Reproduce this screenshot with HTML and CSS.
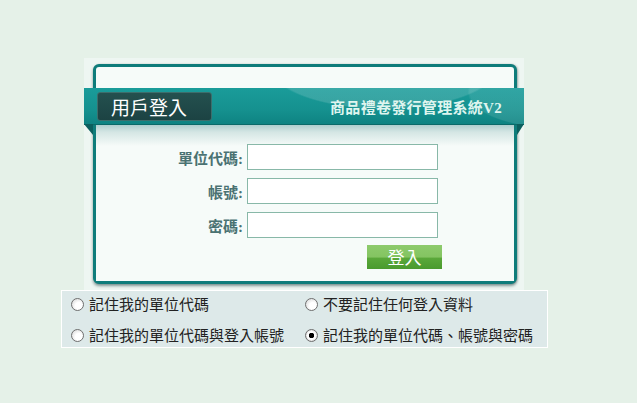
FILE: index.html
```html
<!DOCTYPE html>
<html lang="zh-Hant">
<head>
<meta charset="utf-8">
<title>用戶登入</title>
<link rel="stylesheet" href="styles.css">
</head>
<body>
<div class="page">
  <div class="panel">
    <div class="card">
      <div class="banner">
        <div class="login-tag">用戶登入</div>
        <div class="sys-title">商品禮卷發行管理系統V2</div>
      </div>
      <form class="form">
        <div class="row"><label class="lbl">單位代碼:</label><input class="field" type="text"></div>
        <div class="row"><label class="lbl">帳號:</label><input class="field" type="text"></div>
        <div class="row"><label class="lbl">密碼:</label><input class="field" type="password"></div>
        <div class="btn-row"><button type="button" class="btn">登入</button></div>
      </form>
    </div>
  </div>
  <div class="options">
    <label class="opt"><input type="radio" name="rem" class="radio"><span>記住我的單位代碼</span></label>
    <label class="opt"><input type="radio" name="rem" class="radio"><span>不要記住任何登入資料</span></label>
    <label class="opt"><input type="radio" name="rem" class="radio"><span>記住我的單位代碼與登入帳號</span></label>
    <label class="opt"><input type="radio" name="rem" class="radio" checked><span>記住我的單位代碼、帳號與密碼</span></label>
  </div>
</div>
</body>
</html>
```
FILE: styles.css
```css
html, body {
  margin: 0;
  padding: 0;
  background: #e5f1e8;
  font-family: "Noto Sans CJK TC", "Noto Sans", sans-serif;
}
.page {
  padding: 58px 0 0 61px;
}
.panel {
  margin-left: 23px;
  width: 440px;
  height: 232px;
  background: #eef6f2;
  padding: 6px 0 0 9px;
  box-sizing: border-box;
}
.card {
  position: relative;
  width: 424px;
  height: 220px;
  box-sizing: border-box;
  border: 3px solid #0e7c7a;
  border-radius: 6px;
  background: #f6fbf9;
  box-shadow: 0 2px 3px rgba(0, 40, 40, 0.45), 1px 0 2px rgba(0,0,0,0.15);
  display: flex;
  flex-direction: column;
}
.banner {
  position: relative;
  margin: 21px -10px 0 -12px;
  height: 36px;
  display: flex;
  align-items: center;
  justify-content: space-between;
  padding: 0 22px 0 14px;
  background:
    radial-gradient(ellipse 160px 60px at 300px -22px, rgba(255,255,255,0.14) 0 70%, rgba(255,255,255,0) 72%),
    radial-gradient(ellipse 120px 50px at 470px 4px, rgba(255,255,255,0.10) 0 70%, rgba(255,255,255,0) 72%),
    linear-gradient(180deg, #1a9c9a 0%, #15918f 60%, #0e8382 100%);
  box-shadow: 0 1px 0 #0a6a69;
}
.banner::before,
.banner::after {
  content: "";
  position: absolute;
  top: 36px;
  width: 0;
  height: 0;
  border-top: 11px solid #0b5f5e;
}
.banner::before {
  left: 0;
  border-left: 9px solid transparent;
}
.banner::after {
  right: 0;
  border-right: 7px solid transparent;
}
.login-tag {
  width: 115px;
  height: 29px;
  box-sizing: border-box;
  background: linear-gradient(#24504f, #1c4343);
  border: 1px solid #3d6e6c;
  border-radius: 3px;
  color: #ffffff;
  font-size: 19px;
  line-height: 27px;
  padding-left: 13px;
  margin-left: -1px;
}
.sys-title {
  color: #dff5ef;
  font-family: "Liberation Serif", "Noto Sans CJK TC", serif;
  font-size: 15px;
  font-weight: bold;
  letter-spacing: 0.3px;
}
.form {
  flex: 1;
  background: linear-gradient(180deg, #a9cbcb 0px, #d4e6e4 8px, #f6fbf9 22px);
  padding-top: 20px;
  display: flex;
  flex-direction: column;
  gap: 8px;
}
.row {
  display: flex;
  align-items: center;
  gap: 4px;
}
.lbl {
  width: 147px;
  text-align: right;
  color: #4a7272;
  font-family: "Liberation Serif", "Noto Sans CJK TC", serif;
  font-size: 15px;
  font-weight: bold;
}
.field {
  width: 191px;
  height: 26px;
  box-sizing: border-box;
  border: 1px solid #88b8a8;
  background: #ffffff;
  margin: 0;
}
.btn-row {
  display: flex;
  padding-left: 271px;
  margin-top: -1px;
}
.btn {
  width: 75px;
  height: 24px;
  border: none;
  padding: 0;
  color: #ffffff;
  font-family: inherit;
  font-size: 17px;
  line-height: 24px;
  background: linear-gradient(180deg, #8dca6c 0%, #84c462 50%, #5aa83a 55%, #4a9a2e 100%);
}
.options {
  width: 487px;
  height: 58px;
  box-sizing: border-box;
  border: 1px solid #ffffff;
  background: #dde9e9;
  display: grid;
  grid-template-columns: 234px 1fr;
  align-content: center;
  row-gap: 9px;
  padding: 1px 0 0 9px;
}
.opt {
  display: flex;
  align-items: center;
  gap: 5px;
  font-size: 15px;
  color: #222222;
  line-height: 22px;
  white-space: nowrap;
}
.radio {
  appearance: none;
  -webkit-appearance: none;
  margin: 0;
  width: 13px;
  height: 13px;
  border-radius: 50%;
  border: 1px solid #6f6f6f;
  box-sizing: border-box;
  background: radial-gradient(circle at 62% 62%, #ffffff 0 35%, #d0d0d0 100%);
}
.radio:checked {
  background: radial-gradient(circle, #000000 0 2.5px, #ffffff 3px 4px, #d4d4d4 6px);
}
```
